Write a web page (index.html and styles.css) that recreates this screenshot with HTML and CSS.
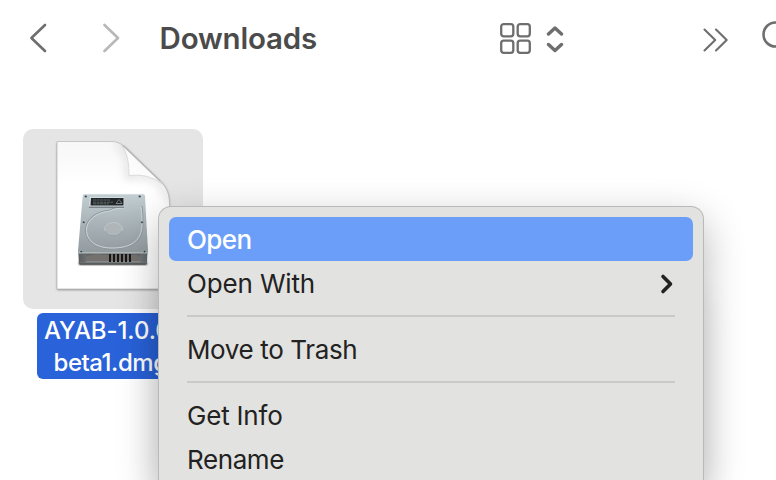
FILE: index.html
```html
<!DOCTYPE html>
<html lang="en">
<head>
<meta charset="utf-8">
<title>Downloads</title>
<link rel="stylesheet" href="styles.css">
</head>
<body>
<div class="window">
  <header class="toolbar">
    <svg class="nav-back" width="18" height="30" viewBox="0 0 18 30"><path d="M16 2 2.400 15 16 28"/></svg>
    <svg class="nav-forward" width="18" height="30" viewBox="0 0 18 30"><path d="M1.500 2 15 15 1.500 28"/></svg>
    <h1 class="title">Downloads</h1>
    <svg class="view-grid" width="32" height="32" viewBox="0 0 32 32"><rect x="1.200" y="1.200" width="12.100" height="12.100" rx="2.500"/><rect x="17.700" y="1.200" width="12.100" height="12.100" rx="2.500"/><rect x="1.200" y="17.700" width="12.100" height="12.100" rx="2.500"/><rect x="17.700" y="17.700" width="12.100" height="12.100" rx="2.500"/></svg>
    <svg class="view-sort" width="18" height="28" viewBox="0 0 18 28"><path d="M2.500 8 9 2 15.500 8M2.500 18.500 9 24.500 15.500 18.500"/></svg>
    <svg class="more" width="26" height="24" viewBox="0 0 26 24"><path d="M1.500 1.500 12.200 12 1.500 22.500M13 1.500 23.700 12 13 22.500"/></svg>
    <svg class="search" width="28" height="34" viewBox="0 0 28 34"><circle cx="13.500" cy="13.500" r="12"/><path d="m22 22 5 7"/></svg>
  </header>
  <main class="files">
    <div class="file">
      <div class="tile">
        <svg width="180" height="180" viewBox="23 129 180 180">
          <defs>
            <linearGradient id="paper" x1="0" y1="0" x2="0" y2="1"><stop offset="0" stop-color="#f7f7f7"/><stop offset=".3" stop-color="#fff"/></linearGradient>
            <linearGradient id="curl" x1="0" y1="1" x2="1" y2="0"><stop offset="0" stop-color="#fff"/><stop offset=".5" stop-color="#fafafa"/><stop offset="1" stop-color="#d8d8d8"/></linearGradient>
            <linearGradient id="metal" x1="0" y1="0" x2="0" y2="1"><stop offset="0" stop-color="#c3ced3"/><stop offset=".45" stop-color="#abb5ba"/><stop offset="1" stop-color="#929a9e"/></linearGradient>
            <linearGradient id="front" x1="0" y1="0" x2="0" y2="1"><stop offset="0" stop-color="#55585a"/><stop offset=".8" stop-color="#898c8d"/><stop offset="1" stop-color="#3b3d3e"/></linearGradient>
            <linearGradient id="foot" x1="0" y1="0" x2="1" y2="0"><stop offset="0" stop-color="#5b5f61"/><stop offset=".5" stop-color="#a0a4a6"/><stop offset="1" stop-color="#64686a"/></linearGradient>
            <filter id="soft" x="-20%" y="-20%" width="140%" height="140%"><feGaussianBlur stdDeviation="1.200"/></filter>
            <filter id="wide" x="-50%" y="-50%" width="200%" height="200%"><feGaussianBlur stdDeviation="4"/></filter>
            <clipPath id="sheet"><path d="M57 141.500H112C118 141.500 123 145 127 149L160 181C166 187 169.500 193 169.500 204V289H57Z"/></clipPath>
          </defs>
          <path d="M57 143H112C118 143 123 145 127 149L160 181C166 187 169.500 193 169.500 204V290H57Z" fill="#888" filter="url(#soft)"/>
          <path d="M57 141.500H112C118 141.500 123 145 127 149L160 181C166 187 169.500 193 169.500 204V289H57Z" fill="url(#paper)" stroke="#bdbdbd" stroke-width=".8"/>
          <g clip-path="url(#sheet)"><path d="M117 142Q129 151 128 177Q147 173 160 184L172 203" fill="none" stroke="#c4c4c4" stroke-width="5" opacity=".55" filter="url(#wide)"/></g>
          <path d="M123 146Q129.500 155 129 175.500Q146 173 159 180.500Z" fill="url(#curl)"/>
          <path d="M121 144.500Q129.500 155 129 175.500Q148 173 162 184" fill="none" stroke="#d5d5d5" stroke-width=".8"/>
          <path d="M123 145.500 160 181" fill="none" stroke="#b5b5b5" stroke-width="1.200"/>
          <path d="M79 262H147V265H79Z" fill="#555" filter="url(#soft)"/>
          <path d="M78.300 252H147.500L147 263Q147 264.500 145 264.500H80.500Q78.700 264.500 78.700 263Z" fill="url(#front)"/>
          <path d="M86 258Q94 252 103 255H137L142 261H84Z" fill="#73706e"/>
          <path d="M79 254H86V262.500H79ZM140.500 254H147V262.500H140.500Z" fill="url(#foot)"/>
          <path d="M110 254V262M114 254V262M118 254V262M122 254V262M126 254V262M130 254V262" stroke="#171717" stroke-width="2"/>
          <path d="M84.800 194H142.500Q144.800 194 145 196L148 251Q148 253.500 146 253.500H80Q77.800 253.500 78 251L82.700 196Q83 194 84.800 194Z" fill="url(#metal)"/>
          <path d="M78.300 252.800H147.600" stroke="#c5cacc" stroke-width=".8"/>
          <path d="M84.500 194.400H143" stroke="#d9e1e4" stroke-width=".8"/>
          <path d="M142 206Q143 212 143 224C143 242 132 249 112 249C94 249 85.500 240 85.500 230C85.500 220 95 211.500 108 210.500Q114 207 124 207" fill="none" stroke="#8d989d" stroke-width="1"/>
          <path d="M141 207Q142 213 142 224C142 241 131 248 112 248C94 248 86.500 239 86.500 230C86.500 221 96 212.500 108 211.500Q115 208 124 208" fill="none" stroke="#ccd5d9" stroke-width="1"/>
          <ellipse cx="113.500" cy="229" rx="8.900" ry="6.500" fill="#aeb6ba" stroke="#c3cbcf" stroke-width=".8"/>
          <path d="M105 231Q107 235.500 113.500 235.700Q120 235.500 122 231" fill="none" stroke="#8c969b" stroke-width=".8"/>
          <path d="M89 206H124V208H89Z" fill="#7b858a"/><path d="M89.800 197H124L124.300 206.500H89Z" fill="#d6dde0"/>
          <path d="M91 198H123.500V205.500H90.500Z" fill="#222729"/>
          <path d="M93 200H110M93 202.200H113M93 203.800H109" stroke="#85898b" stroke-width=".6" stroke-dasharray="3 .5"/>
          <path d="M116 203.500 119 199.500 122 203.500ZM116 203.500H122" fill="none" stroke="#85898b" stroke-width=".7"/>
          <g fill="#27404a" stroke="#d2dce0" stroke-width=".5"><circle cx="85.800" cy="196.500" r="1.300"/><circle cx="139.700" cy="196.500" r="1.300"/><circle cx="83.700" cy="222.200" r="1.300"/><circle cx="142" cy="222.200" r="1.300"/><circle cx="81.300" cy="251.500" r="1.300"/><circle cx="144.500" cy="251.500" r="1.300"/></g>
        </svg>
      </div>
      <div class="label"><div class="line-one">AYAB-1.0.0-</div><div class="line-two">beta1.dmg</div></div>
    </div>
  </main>
</div>
<nav class="menu">
  <div class="item selected"><span class="open">Open</span></div>
  <div class="item"><span class="open-with">Open With</span><svg class="submenu" width="14" height="22" viewBox="0 0 14 22"><path d="M3 3.500 10.500 11 3 18.500"/></svg></div>
  <hr>
  <div class="item"><span class="trash">Move to Trash</span></div>
  <hr>
  <div class="item"><span class="info">Get Info</span></div>
  <div class="item last"><span class="rename">Rename</span></div>
</nav>
</body>
</html>
```
FILE: styles.css
```css
* { box-sizing: border-box; }
html, body { margin: 0; height: 480px; overflow: hidden; }
body { position: relative; background: #fff; font-family: Inter, "Liberation Sans", sans-serif; font-size: 26px; }
svg { display: block; flex: none; }
.window { width: 776px; height: 480px; overflow: hidden; }
.toolbar { display: flex; align-items: center; height: 78px; padding-left: 29px; }
.toolbar svg { fill: none; stroke: #6e6e6e; stroke-width: 2.600; stroke-linecap: round; stroke-linejoin: round; }
.toolbar .nav-back { margin-top: -2px; }
.toolbar .nav-forward { margin: -2px 0 0 56px; stroke: #b8b8b8; }
.title { flex: none; width: 170px; margin: -3px 0 0 38.500px; color: #4b4b4b; font-size: 29.500px; font-weight: 600; line-height: 38px; letter-spacing: -.17px; white-space: nowrap; }
.toolbar .view-grid { margin: 0 0 0 170px; stroke-width: 2.300; }
.toolbar .view-sort { margin: 2px 0 0 14.500px; stroke-width: 3.400; }
.toolbar .more { margin: 2px 0 0 139px; stroke-width: 2.100; }
.toolbar .search { margin: -2px 0 0 32.500px; stroke-width: 2.600; }
.files { padding: 51px 0 0 23px; }
.file { display: flex; flex-direction: column; align-items: center; width: 180px; }
.tile { width: 180px; height: 180px; overflow: hidden; border-radius: 10px; background: #e5e5e5; }
.label { width: 152px; height: 66px; margin-top: 4px; padding: 2px 0 0 8px; border-radius: 6px; background: #2962d9; color: #fff; font-size: 24px; font-weight: 450; line-height: 32px; white-space: nowrap; }
.line-one { letter-spacing: -.1px; margin-left: -1px; }
.line-two { padding-left: 8.500px; letter-spacing: -.45px; }
.menu { position: absolute; left: 159px; top: 207px; width: 544px; height: 273px; padding: 10px 10px 0; border-radius: 12px 12px 0 0; background: #e2e2e0; box-shadow: 0 0 0 1px #b9b9b9, 0 14px 40px rgba(0, 0, 0, .3), 0 90px 36px rgba(0, 0, 0, .08); color: #222; }
.item { display: flex; align-items: center; justify-content: space-between; height: 44px; padding: 2px 19px 0 18px; border-radius: 7px; line-height: 42px; white-space: nowrap; }
.last { height: 42px; padding-top: 3px; line-height: 39px; }
.selected { background: #6a9ef8; color: #fff; font-weight: 500; }
.submenu { margin-top: -1px; fill: none; stroke: #222; stroke-width: 3.600; stroke-linecap: round; stroke-linejoin: round; }
.open { letter-spacing: -.6px; }
.open-with { letter-spacing: -.15px; }
.trash { letter-spacing: -.37px; }
.info { letter-spacing: -.2px; }
.rename { letter-spacing: -.4px; }
hr { height: 2px; margin: 10px 18px; border: 0; background: #cacac8; }
```
